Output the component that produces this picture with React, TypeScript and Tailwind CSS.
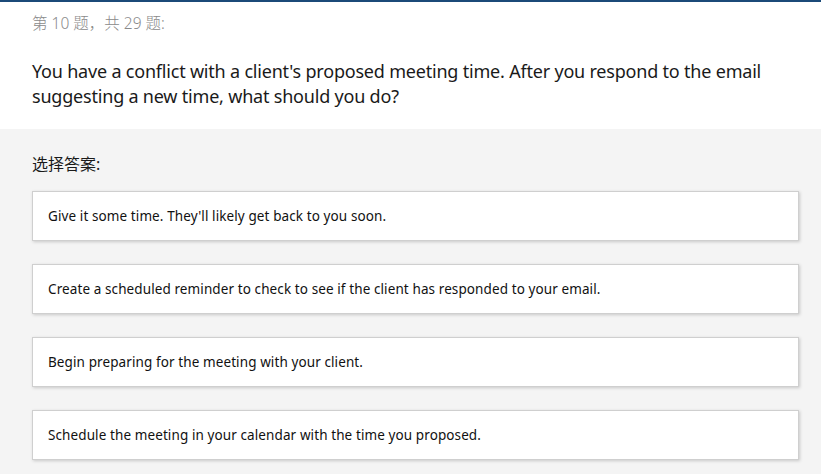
const answers = [
  "Give it some time. They'll likely get back to you soon.",
  'Create a scheduled reminder to check to see if the client has responded to your email.',
  'Begin preparing for the meeting with your client.',
  'Schedule the meeting in your calendar with the time you proposed.',
];

export default function App() {
  return (
    <div
      className="min-h-[474px] bg-[#f4f4f4] text-[#222]"
      style={{ fontFamily: '"Noto Sans", "Noto Sans CJK SC", sans-serif' }}
    >
      <div className="h-[2px] bg-[#1b4a78] shadow-[0_1px_3px_rgba(0,0,0,0.25)]" />
      <div className="bg-white px-8 pt-[10px] pb-[20px]">
        <div className="text-[15.5px] leading-[22px] font-light text-[#8a8a8a]">第 10 题，共 29 题:</div>
        <div className="mt-[25px] text-[18px] leading-[25px] text-[#1a1a1a] tracking-[-0.2px]">
          You have a conflict with a client's proposed meeting time. After you respond to the email suggesting a new time, what should you do?
        </div>
      </div>
      <div className="px-8 pt-[24px] pb-4">
        <div className="text-[16px] leading-[22px] text-[#1a1a1a]">选择答案:</div>
        <div className="mt-[16px] flex w-[767px] flex-col gap-[23px]">
          {answers.map(a => (
            <div
              key={a}
              className="flex h-[50px] items-center border border-[#cfcfcf] bg-white pl-[15px] text-[13.5px] tracking-[0.1px] text-[#111] shadow-[1px_1px_3px_rgba(0,0,0,0.18)]"
            >
              {a}
            </div>
          ))}
        </div>
      </div>
    </div>
  );
}
